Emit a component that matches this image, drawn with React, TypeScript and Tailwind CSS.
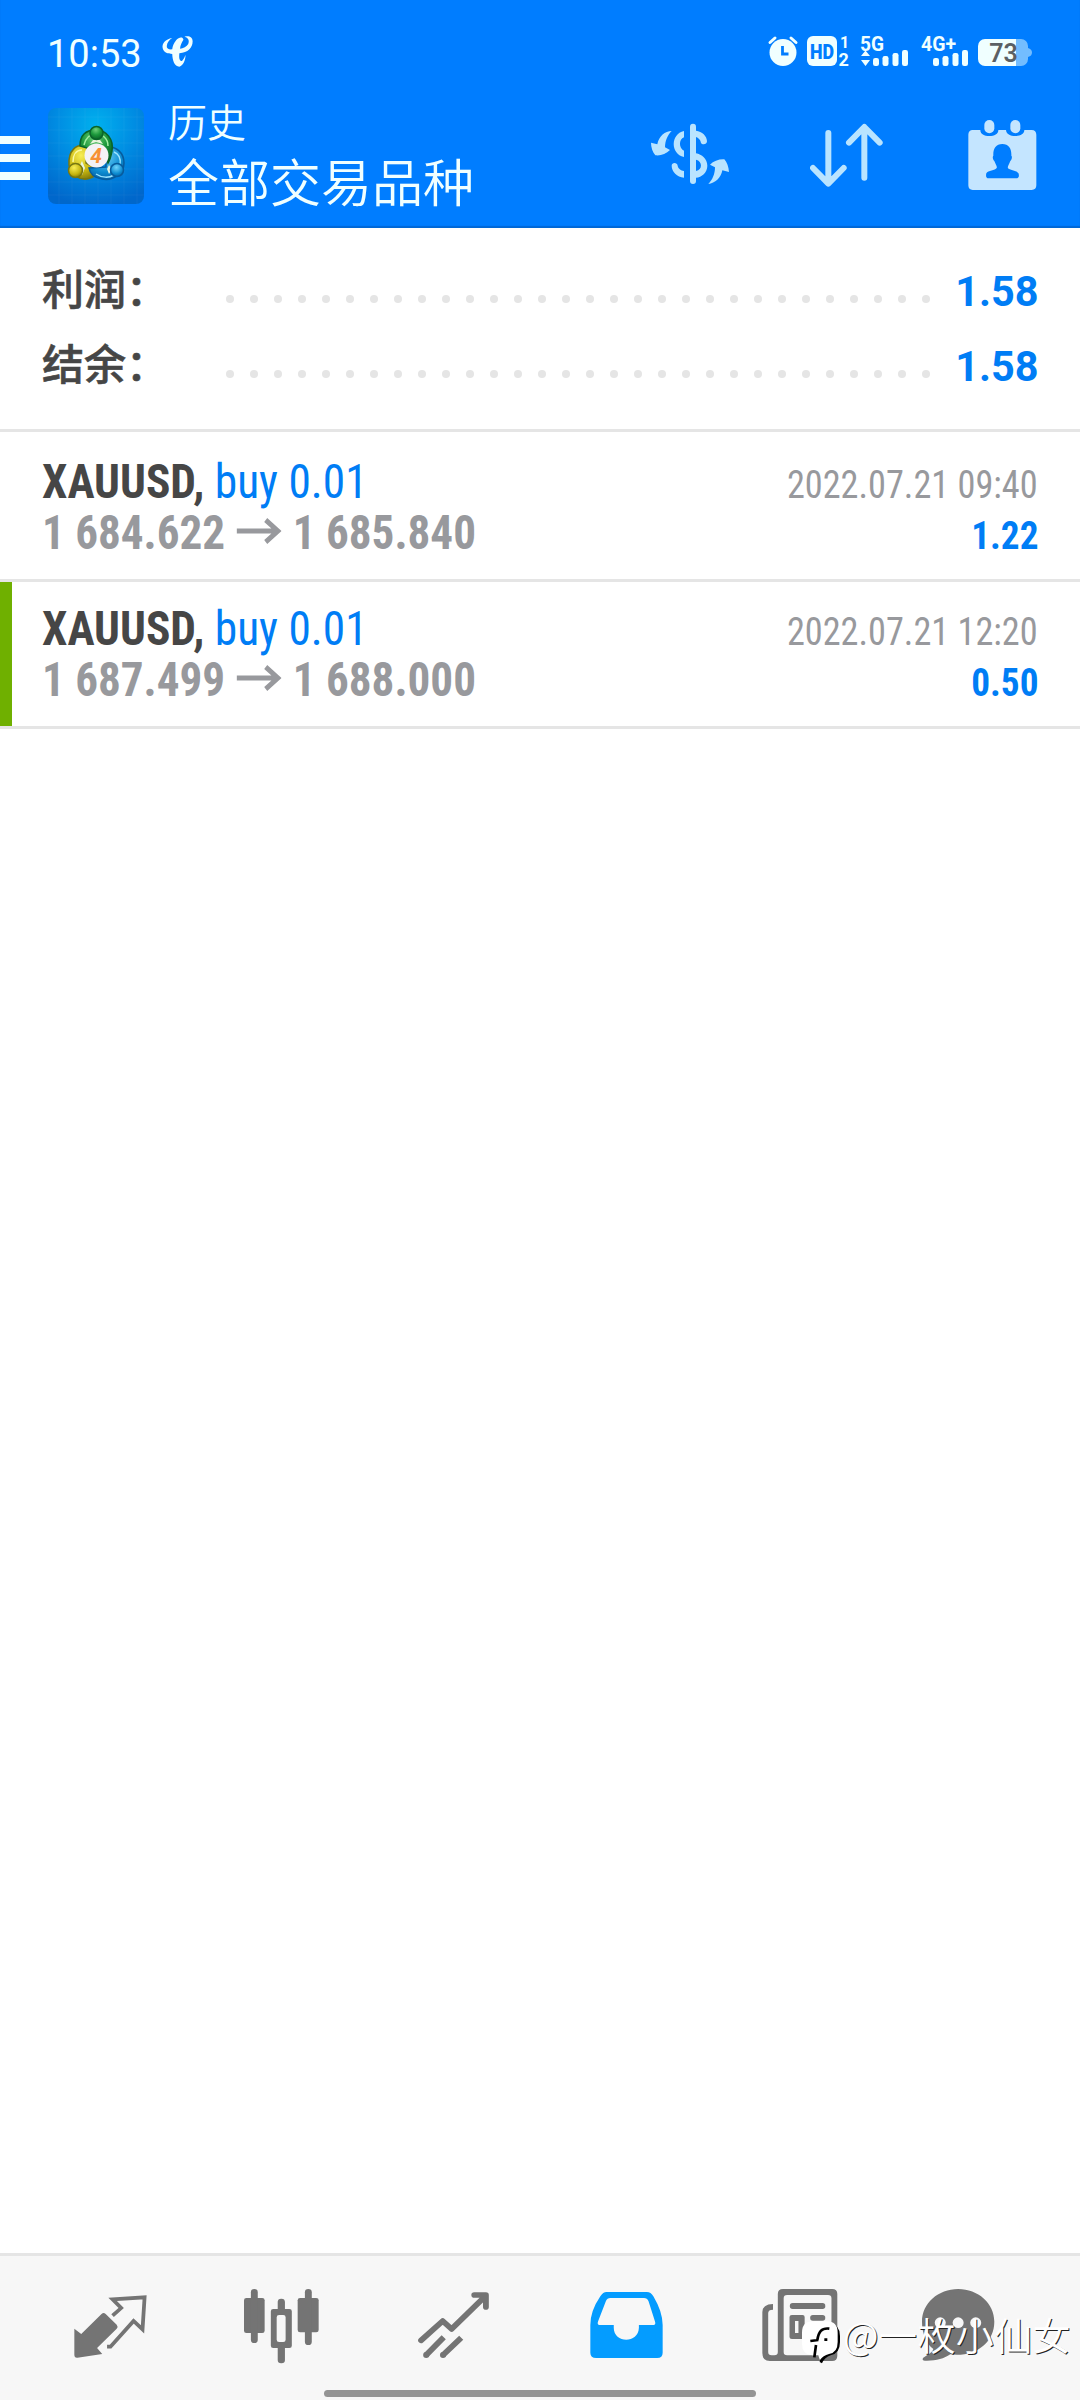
import type { ReactNode } from "react";

const summary = [
  { label: "利润：", value: "1.58" },
  { label: "结余：", value: "1.58" },
];

const deals = [
  { symbol: "XAUUSD,", side: "buy 0.01", from: "1 684.622", to: "1 685.840", time: "2022.07.21 09:40", profit: "1.22", marked: false },
  { symbol: "XAUUSD,", side: "buy 0.01", from: "1 687.499", to: "1 688.000", time: "2022.07.21 12:20", profit: "0.50", marked: true },
];

/* ============================
    STATUS BAR
============================= */
function StatusBar() {
  return (
    <div className="flex h-24 items-start pl-[47px] pr-[47px] text-[#f0ffff]">
      <span className="mt-[31px] w-[114px] shrink-0 font-['Roboto'] text-[38px] leading-[46px]">10:53</span>

      {/* carrier logo */}
      <svg className="mt-[35px] h-[32px] w-[33px] shrink-0" viewBox="465 103 97 96" preserveAspectRatio="none" fill="currentColor">
        <path d="M498 112C478 116 467 128 470 143C473 156 486 160 498 160C499 180 504 197 519 198C531 194 537 178 537 163C533 172 529 182 524 181C518 178 518 168 519 158C544 156 558 142 558 122C558 108 546 104 534 108C546 111 549 120 545 130C541 138 530 143 521 144C522 134 525 126 531 117C529 107 517 110 510 118C502 128 499 136 498 146C488 147 481 144 482 136C483 126 489 118 498 112z" />
      </svg>

      <svg className="ml-auto mt-9 h-[31px] w-[265px] shrink-0 overflow-visible" viewBox="768 36 265 31" fill="currentColor">
        {/* alarm */}
        <circle cx="783" cy="52.5" r="13.5" />
        <path d="M770 42.5l5-4.500M796 42.500l-5-4.500" stroke="currentColor" strokeWidth="3" strokeLinecap="round" />
        <path d="M782.500 46v8h6" fill="none" stroke="#007dff" strokeWidth="2.800" />

        {/* HD */}
        <rect x="807" y="36" width="30" height="30" rx="6" />
        <text x="822" y="58.500" textAnchor="middle" textLength="24" lengthAdjust="spacingAndGlyphs" className="font-['Roboto'] text-[20px] font-black" fill="#007dff">HD</text>
        <text x="840" y="48" className="font-['Roboto'] text-[16px] font-bold">1</text>
        <text x="838.500" y="65.500" className="font-['Roboto'] text-[18px] font-bold">2</text>

        {/* SIM 1 */}
        <text x="860" y="50.500" textLength="24" lengthAdjust="spacingAndGlyphs" className="font-['Roboto'] text-[20px] font-bold">5G</text>
        <path d="M861 56l4.500-5.500 4.500 5.500zM861 60l4.500 6 4.500-6z" />
        <rect x="873" y="58" width="6" height="8" rx="2.200" />
        <rect x="882.500" y="56" width="6" height="10" rx="2.200" />
        <rect x="892.500" y="53" width="6" height="13" rx="2.200" />
        <rect x="902" y="50" width="6" height="16" rx="2.200" />

        {/* SIM 2 */}
        <text x="921" y="50.500" textLength="35" lengthAdjust="spacingAndGlyphs" className="font-['Roboto'] text-[20px] font-bold">4G+</text>
        <rect x="933" y="58" width="6" height="8" rx="2.200" />
        <rect x="942.500" y="56" width="6" height="10" rx="2.200" />
        <rect x="952.500" y="53" width="6" height="13" rx="2.200" />
        <rect x="962" y="50" width="6" height="16" rx="2.200" />

        {/* battery */}
        <path d="M1016 39h5a7 7 0 0 1 7 7v2q4 1 4 4.500t-4 4.500v2a7 7 0 0 1-7 7h-5z" fill="#73bdff" />
        <path d="M1016 39h-31a7 7 0 0 0-7 7v13a7 7 0 0 0 7 7h31z" />
        <text x="1003.500" y="61.500" textAnchor="middle" className="font-['Roboto'] text-[25px] font-semibold" fill="#5b6064">73</text>
      </svg>
    </div>
  );
}

function AppLogo() {
  return (
    <svg className="ml-[18px] mt-3 h-24 w-24 shrink-0" viewBox="0 0 96 96">
      <defs>
        <radialGradient id="tile" cx=".5" cy=".18" r=".85">
          <stop offset="0" stopColor="#00b0ee" />
          <stop offset=".5" stopColor="#008be2" />
          <stop offset="1" stopColor="#0067cb" />
        </radialGradient>
        <radialGradient id="green" cx=".45" cy=".25" r=".8">
          <stop offset="0" stopColor="#6fd07a" />
          <stop offset=".5" stopColor="#1b983b" />
          <stop offset="1" stopColor="#075b24" />
        </radialGradient>
        <radialGradient id="yellow" cx=".4" cy=".3" r=".8">
          <stop offset="0" stopColor="#f8ee55" />
          <stop offset=".6" stopColor="#c5b40f" />
          <stop offset="1" stopColor="#6f6a08" />
        </radialGradient>
        <radialGradient id="blue" cx=".45" cy=".3" r=".8">
          <stop offset="0" stopColor="#6fd3fa" />
          <stop offset=".6" stopColor="#0c8bd0" />
          <stop offset="1" stopColor="#04569a" />
        </radialGradient>
      </defs>
      <rect width="96" height="96" rx="8" fill="url(#tile)" />
      <path d="M11 0v96M24 0v96M37 0v96M50 0v96M63 0v96M76 0v96M89 0v96M0 9h96M0 22h96M0 35h96M0 48h96M0 61h96M0 74h96M0 87h96" stroke="#fff" strokeOpacity=".04" />
      {/* three figures */}
      <g strokeWidth="1.500">
        <path d="M39 38C28 35 20 43 21 57c1 9 10 15 18 14 6-1 10-4 12-9L38 55z" fill="url(#yellow)" stroke="#777711" />
        <path d="M58 40c10-3 18 5 18 15 0 11-11 18-22 16-7-1-12-5-13-11l17-1z" fill="url(#blue)" stroke="#075b9c" />
        <path d="M32 38c0-11 6-16 16-16s18 9 16 21c-1 5-2 9-4 12l-5-15-16 0z" fill="url(#green)" stroke="#0a6429" />
        <path d="M36 37c2-8 6-11 12-11s12 4 12 12" fill="none" stroke="#a0eda2" strokeWidth="1.500" />
        <path d="M34 42c-6 0-9 5-9 12" fill="none" stroke="#faf9a2" strokeWidth="1.500" />
        <path d="M66 44c5 2 7 7 6 13M48 66c6 4 13 4 18 1" fill="none" stroke="#9ce4ff" strokeWidth="1.500" />
        <path d="M42 36l3-4h7l3 4-7-2zM34 53l3 7-3 7-3-8zM61 57l3 4-3 5-2-5z" fill="#e8f4de" />
        <circle cx="48.500" cy="25" r="6.500" fill="url(#green)" stroke="#0a6429" />
        <circle cx="27.500" cy="62.500" r="7" fill="url(#yellow)" stroke="#777711" />
        <circle cx="69" cy="62" r="6.500" fill="url(#blue)" stroke="#075b9c" />
      </g>
      <circle cx="48.500" cy="47.500" r="12" fill="#f4f2f5" />
      <text x="48" y="55" textAnchor="middle" className="font-['Roboto'] text-[21px] font-bold italic" fill="#f79136">4</text>
    </svg>
  );
}

/* ============================
    HEADER
============================= */
function Header() {
  return (
    <header className="h-[228px] bg-[#007dff] shadow-[inset_0_-2px_1px_#0068d6]">
      <StatusBar />
      <div className="flex h-[132px] items-start pr-[43px]">
        <div className="mt-10 flex w-[30px] shrink-0 flex-col gap-[10px]">
          <span className="h-2 bg-[#f0ffff]" />
          <span className="h-2 bg-[#f0ffff]" />
          <span className="h-2 bg-[#f0ffff]" />
        </div>
        <AppLogo />
        <div className="ml-6 font-['Noto_Sans_CJK_SC',sans-serif] font-[350] text-[#f0ffff]">
          <p className="text-[39px] leading-[48px]">历史</p>
          <p className="mt-[6px] text-[51px] leading-[60px]">全部交易品种</p>
        </div>

        <div className="ml-auto mt-6 flex">
          {/* currency */}
          <svg className="h-[70px] w-[78px]" viewBox="93 60 234 210" fill="#b9e4ff">
            <path d="M155 93c-20 0-38 15-43 40l-19-5c0 14 5 29 13 38 16 2 32-4 44-16l-15-8c0-20 8-37 20-49z" />
            <path d="M265 252c20-2 38-18 42-41l20 5c-1-15-6-29-14-38-16-1-32 5-43 16l15 8c0 20-8 38-20 50z" />
            <rect x="210" y="71" width="18" height="181" rx="9" />
            <path d="M192 93v19c-16 6-16 33 0 40v19c-41-9-41-69 0-78zM192 213v20c-21-2-37-18-37-36 0-11 17-11 18 0 1 8 10 15 19 16zM228 92c18 2 33 16 33 32 0 11-18 12-19 1-1-6-7-11-14-14zM228 160c17 3 34 17 34 37s-17 35-34 36v-20c20-3 20-30 0-34z" />
          </svg>
          {/* sort */}
          <svg className="ml-[81px] h-[70px] w-[73px]" viewBox="569 60 219 210" fill="none" stroke="#b9e4ff" strokeWidth="18" strokeLinecap="round" strokeLinejoin="round">
            <path d="M624 99v150M578 204l46 47 46-47M732 233V83M686 128l46-47 46 47" />
          </svg>
          {/* calendar */}
          <svg className="ml-[85px] h-[70px] w-[69px]" viewBox="1043 60 207 210" fill="#c4e5ff">
            <path d="M1057 90h23c0 12 12 18 27 18s27-6 27-18h23c1 12 13 18 28 18s27-6 27-18h22c9 0 14 5 14 14v152c0 9-5 14-14 14h-177c-8 0-13-5-13-14V104c0-9 5-14 13-14z" />
            <rect x="1092" y="60" width="30" height="40" rx="15" />
            <rect x="1170" y="60" width="30" height="40" rx="15" />
            <path d="M1146 132c20 0 28 15 27 35 3 1 2 12-3 16-5 12-9 17-7 22 4 6 29 7 32 16 2 8 0 14-8 14h-82c-8 0-9-7-7-15 5-9 27-8 31-16 2-5-3-10-7-21-5-4-6-14-3-16-1-20 7-35 27-35z" fill="#007dff" />
          </svg>
        </div>
      </div>
    </header>
  );
}

/* ============================
    BOTTOM NAV
============================= */
function NavItem({ children }: { children: ReactNode }) {
  return <div className="flex w-[172px] shrink-0 justify-center">{children}</div>;
}

function BottomNav() {
  return (
    <nav className="relative flex h-[147px] flex-col border-t-[3px] border-[#e5e5e5] bg-[#f7f7f7]">
      <div className="flex flex-1 pl-6 pt-[33px] text-[#747474]">
        {/* quotes */}
        <NavItem>
          <svg className="h-[75px] w-[73px]" viewBox="214 147 212 225" preserveAspectRatio="none" fill="currentColor">
            <path d="M215 266l20 16 59-60q6-6 12 0l32 32q5 6 0 12l-57 58 15 18-72 11q-9 1-9-9z" />
            <path d="M326 227l25-23-25-26 93-6-6 96-26-25-67 77h-10" fill="none" stroke="currentColor" strokeWidth="11" />
          </svg>
        </NavItem>
        {/* charts */}
        <NavItem>
          <svg className="mr-[2px] h-[75px] w-[75px]" viewBox="709 147 218 225" preserveAspectRatio="none" fill="currentColor">
            <rect x="709" y="174" width="60" height="105" rx="7" />
            <rect x="729" y="147" width="20" height="162" rx="10" />
            <rect x="865" y="174" width="61" height="103" rx="7" />
            <rect x="886" y="147" width="20" height="168" rx="10" />
            <rect x="807" y="176" width="21" height="45" rx="10" />
            <rect x="807" y="313" width="21" height="57" rx="10" />
            <path fillRule="evenodd" d="M794 207h47q7 0 7 7v103q0 7-7 7h-47q-7 0-7-7V214q0-7 7-7zM811 225q-7 0-7 7v67q0 7 7 7h12q7 0 7-7v-67q0-7-7-7z" />
          </svg>
        </NavItem>
        {/* trade */}
        <NavItem>
          <svg className="mr-[2px] h-[75px] w-[71px]" viewBox="1213 147 207 225" preserveAspectRatio="none" fill="none" stroke="currentColor" strokeWidth="17" strokeLinejoin="round">
            <path d="M1222 301l63-58 26 24 98-98M1377 165h34v36" strokeLinecap="round" />
            <path d="M1288 292l-51 53M1339 293l-53 52" />
            <g fill="currentColor" stroke="none">
              <circle cx="1237" cy="345" r="9" />
              <circle cx="1286" cy="345" r="9" />
            </g>
          </svg>
        </NavItem>
        {/* history, selected */}
        <NavItem>
          <svg className="h-[75px] w-[73px] text-[#049cff]" viewBox="145 147 212 225" preserveAspectRatio="none" fill="currentColor">
            <path fillRule="evenodd" d="M193 156h117q12 0 19 13 27 47 27 86v83q0 16-16 16H163q-17 0-17-16v-83q0-42 29-86 8-13 18-13zM204 174q-9 0-13 10l-23 61q-3 10 7 10h39v8c0 48 72 48 73 0v-8h40q10 0 7-10l-19-61q-4-10-13-10z" />
          </svg>
        </NavItem>
        {/* news */}
        <NavItem>
          <svg className="ml-[3px] h-[75px] w-[76px]" viewBox="645 147 221 225" preserveAspectRatio="none" fill="currentColor">
            <path fillRule="evenodd" d="M706 147h143q15 0 15 15v185q0 16-15 16H668q-22 0-22-24V216q0-23 31-24v17q-14 0-14 10v117q0 10 10 10h8q10 0 10-10V162q0-15 15-15zM718 165q-10 0-10 10v161q0 10 10 10h119q10 0 10-10V175q0-10-10-10z" />
            <rect x="726" y="189" width="103" height="18" rx="8" />
            <path fillRule="evenodd" d="M732 225h31q6 0 6 6v60q0 6-6 6h-31q-7 0-7-6v-60q0-6 7-6zM741 243v36h10v-36z" />
            <rect x="785" y="225" width="44" height="17" rx="8" />
          </svg>
        </NavItem>
        {/* messages */}
        <NavItem>
          <svg className="mr-6 h-[75px] w-[73px]" viewBox="1108 147 212 225" preserveAspectRatio="none" fill="currentColor">
            <path d="M1213 147c58 0 105 43 105 98 0 63-55 107-128 98-19 14-43 20-74 19-8-1-8-7-1-11 12-8 23-14 26-24-22-18-33-48-33-82 0-55 47-98 105-98z" />
            <g fill="#f7f7f7">
              <circle cx="1161" cy="248" r="16" />
              <circle cx="1213" cy="248" r="16" />
              <circle cx="1264" cy="248" r="16" />
            </g>
          </svg>
        </NavItem>
      </div>

      {/* home indicator */}
      <div className="mx-auto mb-[3px] h-[7px] w-[432px] rounded-full bg-[#949494]" />

      {/* author mark over the icons */}
      <div className="absolute right-[9px] top-[55px] flex items-start">
        <svg className="mr-[2px] mt-[9px] h-[44px] w-[40px]" viewBox="30 44 120 132">
          <path d="M70 54h45q32 4 32 38v18q0 34-28 40-18 6-26 24l-7-4 3-20H70z" fill="#000" />
          <path d="M66 48h40q34 0 34 34v28q0 32-26 36-18 5-27 18-3-6-5-14H64q-31-2-31-35V82q0-34 33-34z" fill="#fff" />
          <path d="M115 70c-24-3-32 10-36 34M58 107l24-3M75 119l-5 37M100 103h9" fill="none" stroke="#000" strokeWidth="8" />
        </svg>
        <span className="font-['Noto_Sans_CJK_SC',sans-serif] text-[38px] font-[350] leading-[46px] tracking-[0.4px] text-white [text-shadow:1px_1px_0_#222]">@一枚小仙女</span>
      </div>
    </nav>
  );
}

export default function App() {
  return (
    <div className="flex h-[2400px] w-[1080px] flex-col overflow-hidden bg-white font-['Roboto',sans-serif]">
      <Header />

      {/* totals */}
      <section className="h-[204px] border-b-[3px] border-[#e5e5e5] px-[42px] pt-6">
        {summary.map((row) => (
          <div key={row.label} className="flex h-[75px] items-center">
            <span className="mb-[5px] w-[184px] font-['Noto_Sans_CJK_SC',sans-serif] text-[42px] font-medium leading-[70px] text-[#464646] [-webkit-text-stroke:0.6px_#464646]">{row.label}</span>
            <span className="mt-[19px] flex gap-4">
              {Array.from({ length: 30 }, (_, i) => (
                <i key={i} className="size-2 rounded-full bg-[#e5e5e5]" />
              ))}
            </span>
            <span className="ml-auto mt-1 origin-right scale-x-[0.985] text-[42px] font-bold leading-[71px] text-[#007df5]">{row.value}</span>
          </div>
        ))}
      </section>

      {/* deals */}
      <main className="flex-1 pt-[3px]">
        {deals.map((deal) => (
          <div key={deal.time} className="flex h-[147px] border-b-[3px] border-[#e5e5e5]">
            <div className={deal.marked ? "w-3 bg-[#6fb000]" : "w-3"} />
            <div className="flex-1 pl-[30px] pr-[42px] pt-[21px] font-stretch-condensed">
              <div className="flex h-[51px] items-baseline justify-between leading-[51px]">
                <p className="origin-left scale-x-[0.945] text-[48px] text-[#007df5]">
                  <b className="text-[#464646]">{deal.symbol}</b> {deal.side}
                </p>
                <p className="origin-right scale-x-[0.93] text-[39px] text-[#98999d]">{deal.time}</p>
              </div>
              <div className="flex h-[51px] items-baseline justify-between font-bold leading-[51px]">
                <p className="origin-left scale-x-[0.94] text-[48px] text-[#98999d]">
                  {deal.from}
                  <svg className="mx-3 inline h-[26px] w-[48px] align-[5px]" viewBox="0 0 48 26" fill="none" stroke="currentColor" strokeWidth="5">
                    <path d="M0 13h44M31 2l13 11-13 11" />
                  </svg>
                  {deal.to}
                </p>
                <p className="origin-right scale-x-[0.955] text-[39px] text-[#007df5]">{deal.profit}</p>
              </div>
            </div>
          </div>
        ))}
      </main>

      <BottomNav />
    </div>
  );
}
